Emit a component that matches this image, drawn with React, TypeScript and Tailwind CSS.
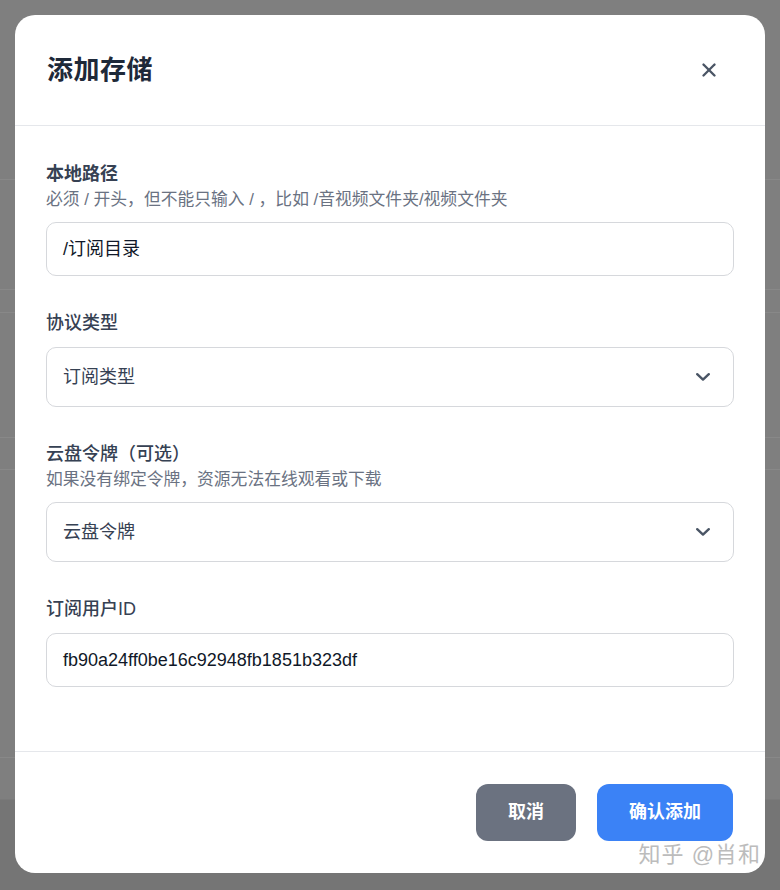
import { X } from 'lucide-react'

const font = { fontFamily: '"Liberation Sans", "Noto Sans CJK SC", sans-serif' }

function Chevron() {
  return (
    <svg width="14" height="8" viewBox="0 0 14 8" fill="none" className="text-gray-600">
      <path d="M1.2 1.2 7 6.6l5.8-5.4" stroke="currentColor" strokeWidth="2.4" strokeLinecap="round" strokeLinejoin="round" />
    </svg>
  )
}

function Field({ label, hint, bold, children }: { label: string; hint?: string; bold?: boolean; children: React.ReactNode }) {
  return (
    <div>
      <div className={`text-[18px] leading-6 text-gray-700 ${bold ? 'font-semibold' : 'font-medium'}`}>{label}</div>
      {hint && <div className="mt-1 text-[16.8px] leading-5 text-gray-500">{hint}</div>}
      <div className="mt-3">{children}</div>
    </div>
  )
}

function TextInput({ value }: { value: string }) {
  return (
    <div className="h-[54px] w-full rounded-[10px] border border-[#d6d8dc] px-4 flex items-center text-[18px] text-gray-900">
      {value}
    </div>
  )
}

function Select({ value }: { value: string }) {
  return (
    <div className="h-[60px] w-full rounded-[10px] border border-[#d6d8dc] pl-4 pr-[23px] flex items-center justify-between text-[18px] text-gray-700">
      <span>{value}</span>
      <Chevron />
    </div>
  )
}

export default function App() {
  return (
    <div className="relative w-[780px] h-[890px] bg-[#7f7f7f] overflow-hidden" style={font}>
      {/* page behind the overlay */}
      <div className="flex flex-col">
        <div className="h-[180px] border-b border-[#888]" />
        <div className="h-[110px] border-b border-[#888]" />
        <div className="h-[23px] border-b border-[#888]" />
        <div className="h-[125px] border-b border-[#888]" />
        <div className="h-[32px] border-b border-[#888]" />
        <div className="h-[288px] border-b border-[#888]" />
        <div className="h-[42px] border-b border-[#7a7a7a]" />
        <div className="h-[90px] bg-[#757575]" />
      </div>

      <div className="absolute inset-0 p-[15px] pb-[17px]">
        <div className="relative h-full w-full bg-white rounded-[20px] flex flex-col overflow-hidden">
          <div className="h-[111px] shrink-0 px-8 flex items-center justify-between border-b border-[#e5e7eb]">
            <h2 className="text-[26px] font-bold text-gray-800 tracking-[0.5px]">添加存储</h2>
            <button className="mr-[13px] text-gray-600">
              <X size={22} strokeWidth={2.6} />
            </button>
          </div>

          <div className="flex-1 px-[31px] pt-[36px] flex flex-col gap-[35px]">
            <Field label="本地路径" hint="必须 / 开头，但不能只输入 / ，比如 /音视频文件夹/视频文件夹" bold>
              <TextInput value="/订阅目录" />
            </Field>
            <Field label="协议类型">
              <Select value="订阅类型" />
            </Field>
            <Field label="云盘令牌（可选）" hint="如果没有绑定令牌，资源无法在线观看或下载">
              <Select value="云盘令牌" />
            </Field>
            <Field label="订阅用户ID">
              <TextInput value="fb90a24ff0be16c92948fb1851b323df" />
            </Field>
          </div>

          <div className="h-[122px] shrink-0 border-t border-[#e5e7eb] px-8 pt-[32px] flex justify-end gap-[21px]">
            <button className="h-[57px] w-[100px] rounded-[12px] bg-[#6b7280] text-white text-[18px] font-bold">取消</button>
            <button className="h-[57px] w-[136px] rounded-[12px] bg-[#3b82f6] text-white text-[18px] font-bold">确认添加</button>
          </div>

          <div className="absolute right-[4px] bottom-[2px] text-[22px] text-[#bcbcbc] tracking-[1px] [text-shadow:0_0_2px_#fff]">
            知乎 @肖和
          </div>
        </div>
      </div>
    </div>
  )
}
